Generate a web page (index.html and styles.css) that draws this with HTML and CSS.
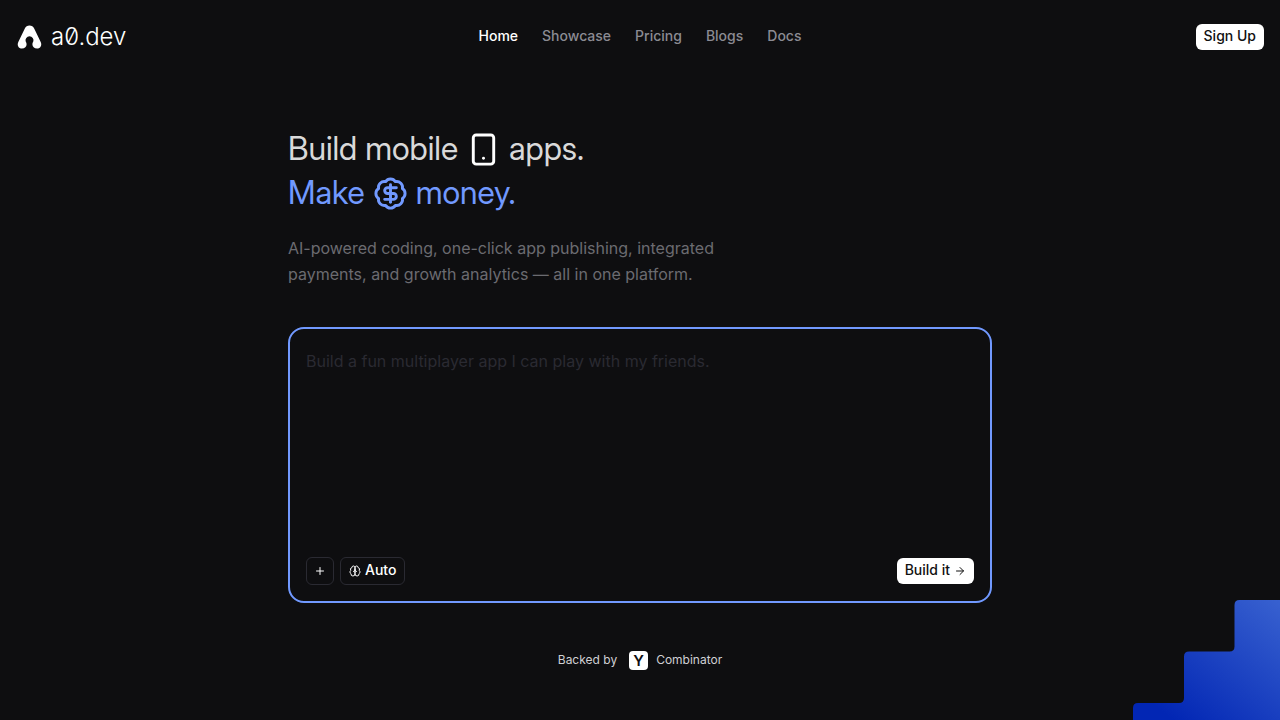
FILE: index.html
```html
<!DOCTYPE html>
<html lang="en">
<head>
    <meta charset="UTF-8">
    <meta name="viewport" content="width=device-width, initial-scale=1.0">
    <title>a0.dev</title>
    <link rel="stylesheet" href="styles.css">
</head>
<body>

    <header class="header">
        <a href="#" class="logo">
            <svg class="logo-mark" viewBox="0 0 24 24" fill="currentColor" aria-hidden="true">
                <path d="M12 .5c-2.100 0-3.800 1.200-4.800 3.200L.8 17C-.8 20.400 1.200 23.600 4.400 23.600c2.900 0 4.700-2 4.700-4.400 0-1.200-.5-1.900-.9-2.700a4 4 0 1 1 7.600 0c-.4.8-.9 1.500-.9 2.700 0 2.400 1.800 4.400 4.700 4.400 3.200 0 5.200-3.200 3.600-6.600L16.800 3.700C15.800 1.700 14.100.5 12 .5z"/>
            </svg>
            <span>a0.dev</span>
        </a>
        <nav class="nav">
            <a href="#" class="active">Home</a>
            <a href="#">Showcase</a>
            <a href="#">Pricing</a>
            <a href="#">Blogs</a>
            <a href="#">Docs</a>
        </nav>
        <div class="header-right">
            <button type="button" class="btn-white">Sign Up</button>
        </div>
    </header>

    <main class="main">
        <h1 class="title">
            <span class="title-line">
                Build mobile
                <svg class="title-icon phone" viewBox="0 0 24 24" aria-hidden="true">
                    <rect width="14" height="20" x="5" y="2" rx="2"/>
                    <path d="M12 18h.01"/>
                </svg>
                apps.
            </span>
            <span class="title-line blue">
                Make
                <svg class="title-icon" viewBox="0 0 24 24" aria-hidden="true">
                    <path d="M3.850 8.620a4 4 0 0 1 4.780-4.770 4 4 0 0 1 6.740 0 4 4 0 0 1 4.780 4.780 4 4 0 0 1 0 6.740 4 4 0 0 1-4.770 4.780 4 4 0 0 1-6.750 0 4 4 0 0 1-4.780-4.770 4 4 0 0 1 0-6.760Z"/>
                    <path d="M16 8h-6a2 2 0 1 0 0 4h4a2 2 0 1 1 0 4H8"/>
                    <path d="M12 18V6"/>
                </svg>
                money.
            </span>
        </h1>

        <p class="subtitle">AI-powered coding, one-click app publishing, integrated payments, and growth analytics — all in one platform.</p>

        <form class="prompt">
            <textarea class="prompt-input" aria-label="Describe your app" placeholder="Build a fun multiplayer app I can play with my friends."></textarea>
            <div class="prompt-bar">
                <button type="button" class="btn-outline btn-add" aria-label="Add attachment">
                    <svg class="icon" viewBox="0 0 24 24" aria-hidden="true"><path d="M5 12h14M12 5v14"/></svg>
                </button>
                <button type="button" class="btn-outline">
                    <svg class="icon" viewBox="0 0 24 24" aria-hidden="true">
                        <path d="M12 5a3 3 0 1 0-5.997.125 4 4 0 0 0-2.526 5.770 4 4 0 0 0 .556 6.588A4 4 0 1 0 12 18Z"/>
                        <path d="M12 5a3 3 0 1 1 5.997.125 4 4 0 0 1 2.526 5.770 4 4 0 0 1-.556 6.588A4 4 0 1 1 12 18Z"/>
                        <path d="M15 13a4.500 4.500 0 0 1-3-4 4.500 4.500 0 0 1-3 4"/>
                    </svg>
                    <span>Auto</span>
                </button>
                <button type="button" class="btn-white btn-build">
                    <span>Build it</span>
                    <svg class="icon" viewBox="0 0 24 24" aria-hidden="true"><path d="M5 12h14M12 5l7 7-7 7"/></svg>
                </button>
            </div>
        </form>
    </main>

    <footer class="backed">
        <span class="backed-text">Backed by</span>
        <span class="yc">Y</span>
        <span class="backed-text">Combinator</span>
    </footer>

    <svg class="steps" viewBox="0 0 147 120" aria-hidden="true">
        <defs>
            <linearGradient id="stepsFill" gradientUnits="userSpaceOnUse" x1="48" y1="126" x2="147" y2="0">
                <stop offset="0" stop-color="#0226b4"/>
                <stop offset="1" stop-color="#3861d0"/>
            </linearGradient>
        </defs>
        <path fill="url(#stepsFill)" d="M0 120v-12q0-5 5-5h41q5 0 5-5V56.500q0-5 5-5h40.500q5 0 5-5V5q0-5 5-5h40.500v120z"/>
    </svg>

</body>
</html>
```
FILE: styles.css
```css
* {
    box-sizing: border-box;
}

body {
    margin: 0;
    min-height: 100vh;
    background-color: #0e0e10;
    color: #fff;
    font-family: Inter, sans-serif;
}

a {
    color: inherit;
    text-decoration: none;
}

button {
    display: flex;
    align-items: center;
    border-radius: 6px;
    font-family: inherit;
    font-size: 14px;
    font-weight: 500;
    line-height: 20px;
    cursor: pointer;
}

svg {
    flex-shrink: 0;
}

/* Header */
.header {
    display: grid;
    grid-template-columns: 1fr auto 1fr;
    align-items: center;
    padding: 22px 16px;
}

.logo {
    display: flex;
    align-items: center;
    gap: 8px;
    font-size: 24px;
    font-weight: 300;
    line-height: 30px;
    font-feature-settings: "zero";
}

.logo-mark {
    width: 27px;
    height: 24px;
}

.nav {
    display: flex;
    gap: 24px;
    padding-bottom: 2px;
    color: #8b8b93;
    font-size: 14px;
    font-weight: 500;
    line-height: 20px;
}

.nav .active {
    color: #fff;
}

.header-right {
    display: flex;
    justify-content: flex-end;
}

.btn-white {
    border: none;
    padding: 2px 8px 4px;
    background-color: #fff;
    color: #111;
}

/* Hero */
.main {
    max-width: 736px;
    margin: 0 auto;
    padding: 53px 16px 0;
}

.title {
    margin: 0;
    color: #d9d9d9;
    font-family: "Inter Display", Inter, sans-serif;
    font-size: 32px;
    font-weight: 400;
    line-height: 44px;
}

.title-line {
    display: flex;
    align-items: center;
    gap: 8px;
}

.title-icon,
.icon {
    fill: none;
    stroke: currentColor;
    stroke-width: 2;
    stroke-linecap: round;
    stroke-linejoin: round;
}

.title-icon {
    width: 35px;
    height: 35px;
}

.phone {
    color: #fff;
}

.blue {
    color: #7199ff;
}

.subtitle {
    max-width: 448px;
    margin: 20px 0 40px;
    color: #6b6b70;
    font-size: 16px;
    line-height: 26px;
}

/* Prompt box */
.prompt {
    display: flex;
    flex-direction: column;
    padding: 16px;
    border: 2px solid #7199ff;
    border-radius: 16px;
}

.prompt-input {
    width: 100%;
    height: 212px;
    padding: 4px 0;
    border: none;
    outline: none;
    resize: none;
    background: transparent;
    color: #fff;
    font-family: inherit;
    font-size: 16px;
    line-height: 24px;
}

.prompt-input::placeholder {
    color: #2a2a32;
}

.prompt-bar {
    display: flex;
    align-items: center;
    gap: 6px;
}

.btn-outline {
    gap: 4px;
    height: 28px;
    padding: 0 8px;
    border: 1px solid #2a2a32;
    background: transparent;
    color: #fff;
}

.btn-add {
    width: 28px;
    padding: 0;
    justify-content: center;
}

.icon {
    width: 12px;
    height: 12px;
}

.btn-outline span,
.btn-build span,
.backed-text {
    padding-bottom: 2px;
}

.btn-build {
    gap: 4px;
    margin-left: auto;
    padding: 2px 8px;
}

/* Footer */
.backed {
    display: flex;
    justify-content: center;
    align-items: center;
    gap: 8px;
    padding: 48px 16px;
    color: #d0d0d4;
    font-size: 12px;
    line-height: 16px;
}

.yc {
    width: 19px;
    height: 19px;
    margin-left: 4px;
    border-radius: 4px;
    background-color: #fff;
    color: #0e0e10;
    font-size: 15px;
    font-weight: 600;
    line-height: 19px;
    text-align: center;
}

/* Corner decoration */
.steps {
    position: fixed;
    right: 0;
    bottom: 0;
    width: 147px;
    height: 120px;
}
```
